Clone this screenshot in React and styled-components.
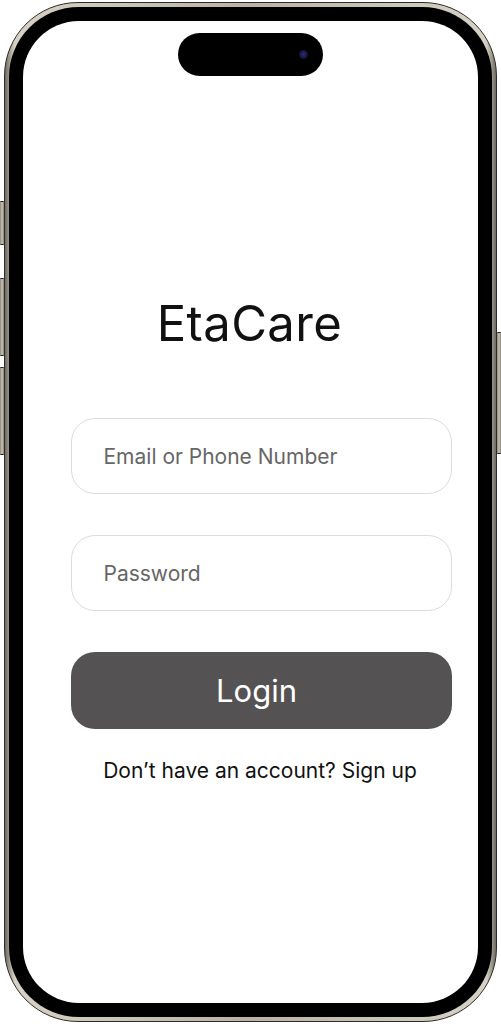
import styled, {createGlobalStyle} from 'styled-components';

const Global = createGlobalStyle`
	html, body {
		margin: 0;
		padding: 0;
		background: #ffffff;
	}
	body {
		font-family: 'Inter', 'Liberation Sans', sans-serif;
	}
`

const Stage = styled.div`
	width: 501px;
	height: 1024px;
	padding: 2px 4px;
	box-sizing: border-box;
	position: relative;
`
const Frame = styled.div`
	height: 100%;
	box-sizing: border-box;
	border-radius: 74px;
	padding: 4px;
	background: linear-gradient(90deg, #6f6a61 0%, #d8d2c6 2%, #b9b2a5 50%, #d8d2c6 98%, #6f6a61 100%);
	border: 1px solid #2d2b28;
`
const Bezel = styled.div`
	height: 100%;
	box-sizing: border-box;
	border-radius: 70px;
	padding: 14px;
	background: #000;
`
const Screen = styled.div`
	height: 100%;
	border-radius: 56px;
	background: #fff;
	display: flex;
	flex-direction: column;
	align-items: center;
	padding: 12px 0 0;
	box-sizing: border-box;
	overflow: hidden;
`
const Island = styled.div`
	width: 145px;
	height: 43px;
	border-radius: 22px;
	background: #000;
	display: flex;
	justify-content: flex-end;
	align-items: center;
	padding-right: 15px;
	box-sizing: border-box;
	flex-shrink: 0;
`
const Lens = styled.div`
	width: 9px;
	height: 9px;
	border-radius: 50%;
	background: radial-gradient(circle, #2a2f7a 0%, #14163a 60%, #05050c 100%);
`
const SideButton = styled.div`
	position: absolute;
	top: ${p => p.$top}px;
	height: ${p => p.$h}px;
	${p => p.$right ? 'right: 0;' : 'left: 0;'}
	width: 4px;
	background: linear-gradient(90deg, #8a857b, #c9c2b5, #8a857b);
	border-radius: 1px;
	border-top: 1px solid #222;
	border-bottom: 1px solid #222;
`
const Title = styled.h1`
	margin: 220px 0 0 -2px;
	font-size: 49px;
	font-weight: 400;
	color: #111;
	letter-spacing: 0.4px;
	line-height: 56px;
`
const Form = styled.div`
	width: 381px;
	margin: 66px 0 0 21px;
	display: flex;
	flex-direction: column;
`
const Field = styled.div`
	height: 76px;
	border: 1px solid #dcdcdc;
	border-radius: 24px;
	box-sizing: border-box;
	display: flex;
	align-items: center;
	padding-left: 32px;
	font-size: 21px;
	color: #666;
	margin-bottom: ${p => p.$gap}px;
`
const Button = styled.div`
	height: 77px;
	border-radius: 24px;
	background: #545253;
	color: #fff;
	font-size: 31px;
	display: flex;
	align-items: center;
	justify-content: center;
	padding-right: 9px;
`
const Footer = styled.div`
	margin-top: 29px;
	text-align: center;
	font-size: 21px;
	color: #111;
	padding-right: 2px;
`

const App = () => {
	return (
		<Stage>
			<Global />
			<SideButton $top={201} $h={42} />
			<SideButton $top={278} $h={76} />
			<SideButton $top={367} $h={86} />
			<SideButton $right $top={332} $h={120} />
			<Frame>
				<Bezel>
					<Screen>
						<Island><Lens /></Island>
						<Title>EtaCare</Title>
						<Form>
							<Field $gap={41}>Email or Phone Number</Field>
							<Field $gap={41}>Password</Field>
							<Button>Login</Button>
							<Footer>Don’t have an account? Sign up</Footer>
						</Form>
					</Screen>
				</Bezel>
			</Frame>
		</Stage>
	)
}

export default App
